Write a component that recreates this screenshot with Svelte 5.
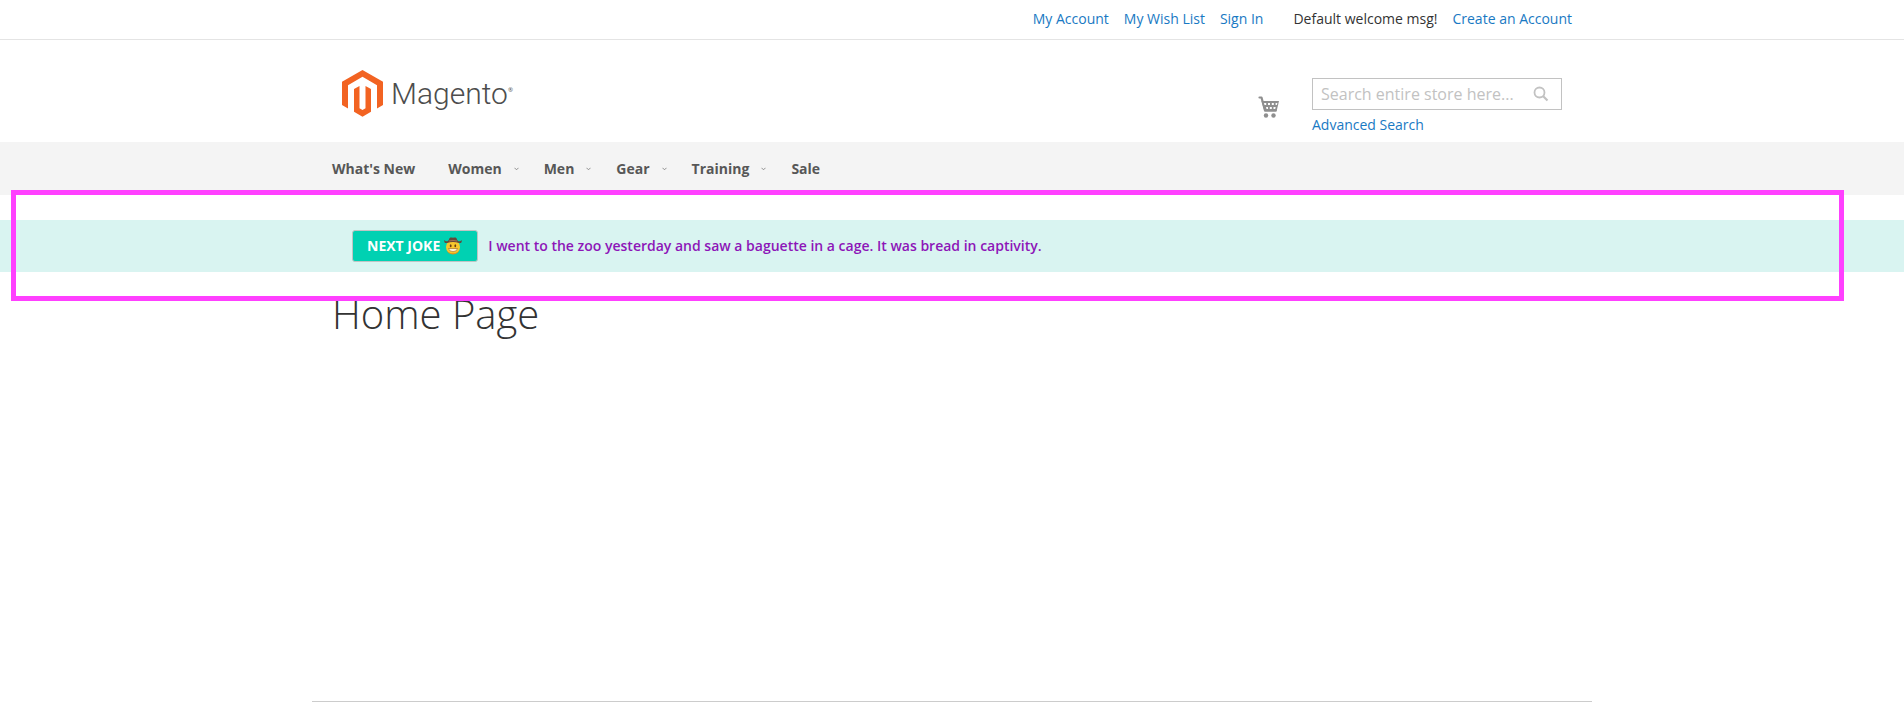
<script lang="ts">
  const accountLinks = ['My Account', 'My Wish List', 'Sign In'];
  const categories = [
    { label: "What's New", menu: false },
    { label: 'Women', menu: true },
    { label: 'Men', menu: true },
    { label: 'Gear', menu: true },
    { label: 'Training', menu: true },
    { label: 'Sale', menu: false }
  ];
  const joke = 'I went to the zoo yesterday and saw a baguette in a cage. It was bread in captivity.';
</script>

<div class="panel">
  <div class="container panel-inner">
    {#each accountLinks as label}
      <a href="#top">{label}</a>
    {/each}
    <span class="welcome">Default welcome msg!</span>
    <a href="#top">Create an Account</a>
  </div>
</div>

<header class="container header">
  <a class="logo" href="#top" aria-label="Magento">
    <svg width="41" height="47" viewBox="0 0 41 47" aria-hidden="true">
      <path fill="#f26322" d="M20.500 0 41 11.800V35.100L35 38.500V15.200L20.500 6.800 6 15.200V38.500L0 35.100V11.800Z" />
      <path fill="#f26322" d="M17.500 16V38.200L20.500 39.900 23.500 38.200V16L29 19V41.800L20.500 46.800 12 41.800V19Z" />
    </svg>
    <span class="wordmark">Magento</span><span class="mark">®</span>
  </a>
  <div class="tools">
    <a class="cart" href="#top" aria-label="My Cart">
      <svg width="22" height="22" viewBox="0 0 22 22" aria-hidden="true">
        <path d="M1.500 1.500H3.500L7 14.500H17.500" fill="none" stroke="#8f8f8f" stroke-width="2.200" stroke-linecap="round" stroke-linejoin="round" />
        <path fill="#8f8f8f" d="M3.500 5H21L18.500 15.500H6.500Z" />
        <path fill="#fff" d="M6 7h2.200v2H6.500zM10 7h2v2h-2zM13.800 7h2v2h-2zM17.600 7h1.800l-.5 2h-1.300zM8 11h2v2H8.500zM11.800 11h2v2h-2zM15.500 11h2.200l-.5 2h-1.700z" />
        <circle cx="8" cy="19.500" r="2.200" fill="#8f8f8f" />
        <circle cx="15.500" cy="19.500" r="2.200" fill="#8f8f8f" />
      </svg>
    </a>
    <form class="search">
      <div class="field">
        <input type="text" aria-label="Search" placeholder="Search entire store here..." />
        <button type="button" aria-label="Submit search">
          <svg width="16" height="16" viewBox="0 0 16 16" fill="none" stroke="#c2c2c2" aria-hidden="true">
            <circle cx="6.500" cy="6.500" r="5" stroke-width="1.800" />
            <path d="M10.200 10.200 14.500 14.500" stroke-width="2.200" />
          </svg>
        </button>
      </div>
      <a href="#top">Advanced Search</a>
    </form>
  </div>
</header>

<nav class="nav">
  <ul class="container">
    {#each categories as item}
      <li class:plain={!item.menu}>
        <a href="#top">{item.label}
          {#if item.menu}
            <svg width="5" height="4" viewBox="0 0 5 4" aria-hidden="true">
              <path d="M.5.800 2.500 2.800 4.500.800" fill="none" stroke="#777" stroke-width=".8" />
            </svg>
          {/if}
        </a>
      </li>
    {/each}
  </ul>
</nav>

<section class="joke-area">
  <div class="joke-bar">
    <div class="container joke">
      <button type="button">NEXT JOKE
        <svg width="18" height="18" viewBox="0 0 18 18" role="img" aria-label="cowboy">
          <circle cx="9" cy="10" r="7" fill="#f9c72c" />
          <path d="M2.500 13a7 7 0 0 0 13 0 8 8 0 0 1-13 0z" fill="#e58e17" />
          <path d="M.5 3C1.500 5 4.500 4.500 5 2.500 5.500.500 6.500.200 9 .8c2.500-.6 3.500-.3 4 1.700.5 2 3.500 2.500 4.500.500.800 2-.500 3.500-2.500 3-4-1.200-8-1.200-12 0C1 6.500-.300 5 .5 3Z" fill="#64483b" />
          <path d="M5 4q4-1.200 8 0" fill="none" stroke="#a5714e" stroke-width="1" />
          <ellipse cx="6.700" cy="8.700" rx=".9" ry="1.500" fill="#6b3f16" />
          <ellipse cx="11.300" cy="8.700" rx=".9" ry="1.500" fill="#6b3f16" />
          <path d="M4.500 11.500h9q-.5 3.200-4.500 3.200t-4.500-3.200z" fill="#fff3d0" stroke="#9b6318" stroke-width=".6" />
        </svg>
      </button>
      <span>{joke}</span>
    </div>
  </div>
  <div class="highlight"></div>
</section>

<main class="container main">
  <h1>Home Page</h1>
</main>
<footer class="footer"></footer>

<style>
  :global(body) {
    background: #fff;
    color: #333;
    font: 14px/20px "Open Sans", sans-serif;
  }
  a {
    color: #1979c3;
    text-decoration: none;
  }
  .container {
    box-sizing: border-box;
    width: 100%;
    max-width: 1280px;
    margin: 0 auto;
    padding: 0 20px;
  }
  .panel {
    border-bottom: 1px solid #e4e4e4;
  }
  .panel-inner {
    display: flex;
    justify-content: flex-end;
    gap: 15px;
    padding-top: 9px;
    padding-bottom: 10px;
  }
  .welcome {
    margin-left: 15px;
  }
  .header {
    display: flex;
    justify-content: space-between;
    align-items: flex-start;
    padding: 30px 30px 7px;
  }
  .logo {
    display: flex;
    align-items: center;
    color: #4d4d4d;
  }
  .wordmark {
    margin-left: 8px;
    font: 300 30px/46px Roboto, sans-serif;
  }
  .mark {
    font-size: 6px;
    line-height: 8px;
    padding-bottom: 8px;
  }
  .tools {
    display: flex;
    align-items: flex-start;
    gap: 32px;
  }
  .cart {
    padding-top: 26px;
  }
  .cart svg,
  .field svg,
  .logo svg {
    display: block;
  }
  .search {
    padding-top: 8px;
  }
  .field {
    box-sizing: border-box;
    display: flex;
    align-items: center;
    width: 250px;
    height: 32px;
    margin-bottom: 5px;
    border: 1px solid #c2c2c2;
  }
  .field input {
    flex: 1;
    min-width: 0;
    padding: 0 8px;
    border: 0;
    outline: 0;
    background: none;
    font: 16px/22px "Open Sans", sans-serif;
  }
  .field input::placeholder {
    color: #c2c2c2;
  }
  .field button {
    padding: 0 12px 0 0;
    border: 0;
    background: none;
  }
  .nav {
    background: #f4f4f4;
  }
  .nav ul {
    display: flex;
    gap: 25px;
    list-style: none;
  }
  .plain {
    padding-right: 8px;
  }
  .nav a {
    display: flex;
    align-items: center;
    gap: 12px;
    color: #575757;
    font-weight: 700;
    line-height: 53px;
  }
  .joke-area {
    position: relative;
    padding: 25px 0 24px;
  }
  .joke-bar {
    background: #d9f4f1;
  }
  .joke {
    display: flex;
    align-items: center;
    gap: 10px;
    padding: 10px 40px;
    color: #8d16b8;
    font-weight: 600;
  }
  .joke button {
    display: flex;
    align-items: center;
    gap: 4px;
    padding: 5px 15px 5px 14px;
    border: 1px solid #c0c4c4;
    border-radius: 3px;
    background: #00d1b2;
    color: #fff;
    font: 700 14px/20px "Open Sans", sans-serif;
  }
  /* Frame laid over the joke area and the top of the page title */
  .highlight {
    position: absolute;
    inset: -5px 60px -5px 11px;
    border: 5px solid #ff40ff;
    pointer-events: none;
  }
  .main {
    min-height: 405px;
  }
  h1 {
    margin: 0;
    font-size: 40px;
    font-weight: 300;
    line-height: 36px;
  }
  .footer {
    box-sizing: border-box;
    max-width: 1280px;
    margin: 0 auto;
    border-top: 1px solid #ccc;
  }
</style>
